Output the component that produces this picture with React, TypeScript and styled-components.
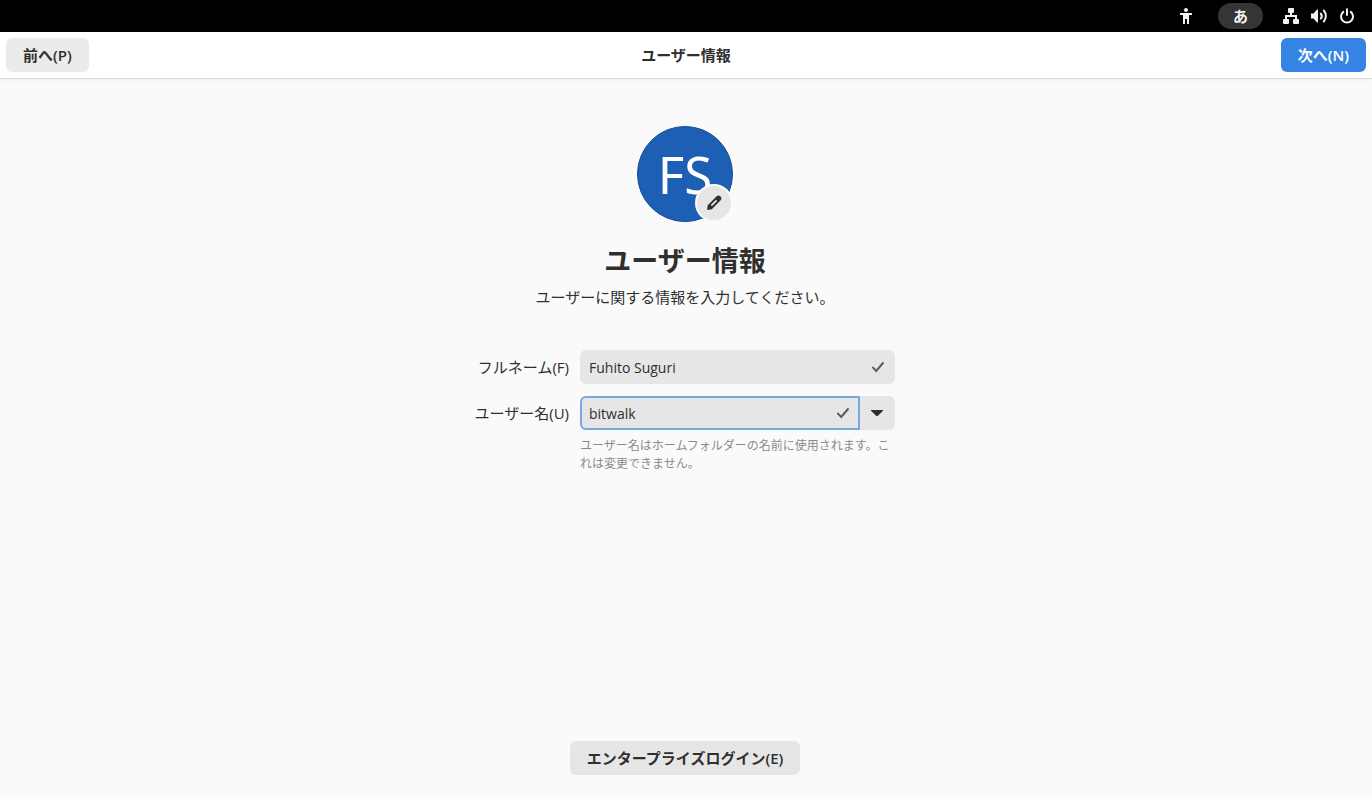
import React, { useState } from "react";
import styled, { createGlobalStyle } from "styled-components";

const Global = createGlobalStyle`
  * { box-sizing: border-box; }
  html, body, #root { height: 100%; }
  body {
    margin: 0;
    background: #fafafa;
    color: #2f2f2f;
    font-family: "Open Sans", "Noto Sans CJK JP", sans-serif;
    font-size: 15px;
    line-height: 22px;
  }
  button, input {
    font: inherit;
    color: inherit;
    border: 0;
    margin: 0;
  }
`;

const Page = styled.div`
  display: flex;
  flex-direction: column;
  min-height: 100%;
`;

const SystemBar = styled.div`
  display: flex;
  justify-content: flex-end;
  align-items: center;
  height: 32px;
  padding-right: 17px;
  background: #000;
  color: #f2f2f2;
`;

const StatusButton = styled.button`
  display: flex;
  padding: 0;
  background: none;
`;

const InputSource = styled.button`
  width: 45px;
  height: 26px;
  padding: 0;
  margin: 0 20px 0 24px;
  border-radius: 13px;
  background: #353535;
  font-weight: 700;
`;

const StatusGroup = styled.div`
  display: flex;
  gap: 12px;
`;

const HeaderBar = styled.header`
  display: grid;
  grid-template-columns: 1fr auto 1fr;
  align-items: center;
  height: 47px;
  padding: 0 6px;
  background: #fff;
  border-bottom: 1px solid #dadada;
  box-shadow: 0 1px 2px rgba(0, 0, 0, 0.06);
`;

const HeaderTitle = styled.div`
  font-weight: 600;
`;

const Button = styled.button<{ $tone?: "primary" | "header"; $end?: boolean }>`
  height: 34px;
  padding: 0 17px;
  border-radius: 6px;
  font-weight: 600;
  justify-self: ${(p) => (p.$end ? "end" : "start")};
  background: ${(p) =>
    p.$tone === "primary" ? "#3584e4" : p.$tone === "header" ? "#ebebeb" : "#e6e6e6"};
  color: ${(p) => (p.$tone === "primary" ? "#fff" : "#2f2f2f")};
`;

const Main = styled.main`
  flex: 1;
  display: flex;
  flex-direction: column;
  align-items: center;
  padding: 47px 26px 24px 24px;
`;

const Avatar = styled.div`
  position: relative;
  display: flex;
  align-items: center;
  justify-content: center;
  width: 96px;
  height: 96px;
  border-radius: 50%;
  border: 1px solid #184f94;
  background: #1c5fb4;
  color: #fff;
  font-family: "Noto Sans", sans-serif;
  font-size: 51px;
  line-height: 70px;
`;

const EditAvatar = styled.button`
  position: absolute;
  right: -1px;
  bottom: -1px;
  display: flex;
  align-items: center;
  justify-content: center;
  width: 38px;
  height: 38px;
  padding: 0;
  border: 2px solid #fafafa;
  border-radius: 50%;
  background: #e6e6e6;
  color: #2f2f2f;
`;

const Heading = styled.h1`
  margin: 19px 0 0;
  font-size: 27px;
  line-height: 40px;
  font-weight: 700;
`;

const Subtitle = styled.p`
  margin: 5px 0 0;
`;

const Form = styled.form`
  display: grid;
  grid-template-columns: 94px 315px;
  column-gap: 11px;
  align-items: center;
  margin-top: 42px;
`;

const Label = styled.label`
  justify-self: end;
  white-space: nowrap;
`;

const UserLabel = styled(Label)`
  margin-top: 12px;
`;

const Field = styled.div<{ $joined?: boolean }>`
  flex: 1;
  display: flex;
  align-items: center;
  min-width: 0;
  height: 34px;
  padding: 0 9px;
  border-radius: ${(p) => (p.$joined ? "6px 0 0 6px" : "6px")};
  background: #e6e6e6;
  box-shadow: ${(p) => (p.$joined ? "inset 0 0 0 2px #7ba7e0" : "none")};
`;

const TextInput = styled.input`
  flex: 1;
  min-width: 0;
  padding: 2px 0 0;
  background: none;
  outline: none;
  font-size: 14px;
`;

const UserRow = styled.div`
  display: flex;
  margin-top: 12px;
`;

const DropButton = styled.button`
  display: flex;
  align-items: center;
  justify-content: center;
  width: 35px;
  padding: 0 1px 0 0;
  border-radius: 0 6px 6px 0;
  background: #e6e6e6;
`;

const Hint = styled.p`
  grid-column: 2;
  margin: 7px 0 0;
  font-size: 12px;
  line-height: 18px;
  color: #8a8a8a;
`;

const Footer = styled.div`
  margin-top: auto;
`;

const Icon = ({ children }: { children: React.ReactNode }) => (
  <svg width="16" height="16" viewBox="0 0 16 16" fill="currentColor" aria-hidden="true">
    {children}
  </svg>
);

const CheckIcon = () => (
  <Icon>
    <path d="M3 8.600 6.200 12 13 4" fill="none" stroke="#5c5c5c" strokeWidth="2" strokeLinecap="round" />
  </Icon>
);

export default function App() {
  const [fullName, setFullName] = useState("Fuhito Suguri");
  const [userName, setUserName] = useState("bitwalk");

  return (
    <Page lang="ja">
      <Global />
      <SystemBar>
        <StatusButton aria-label="アクセシビリティ">
          <Icon>
            <circle cx="8" cy="2" r="2" />
            <path d="M2.500 5h11a.5.5 0 0 1 .5.5v1a.5.5 0 0 1-.5.5H11v8.500a.5.5 0 0 1-.5.5h-1a.5.5 0 0 1-.5-.5V11H7v4.500a.5.5 0 0 1-.5.5h-1a.5.5 0 0 1-.5-.5V7H2.500a.5.5 0 0 1-.5-.5v-1a.5.5 0 0 1 .5-.5z" />
          </Icon>
        </StatusButton>
        <InputSource>あ</InputSource>
        <StatusGroup>
          <StatusButton aria-label="ネットワーク">
            <Icon>
              <path d="M6 0h4a1 1 0 0 1 1 1v3a1 1 0 0 1-1 1H9v2h5v4h1a1 1 0 0 1 1 1v3a1 1 0 0 1-1 1h-4a1 1 0 0 1-1-1v-3a1 1 0 0 1 1-1h1V9H4v2h1a1 1 0 0 1 1 1v3a1 1 0 0 1-1 1H1a1 1 0 0 1-1-1v-3a1 1 0 0 1 1-1h1V7h5V5H6a1 1 0 0 1-1-1V1a1 1 0 0 1 1-1z" />
            </Icon>
          </StatusButton>
          <StatusButton aria-label="音量">
            <Icon>
              <path d="M0 5.500h2.500L6 1.500h1v13H6l-3.500-4H0z" />
              <path d="M9.800 5.500a4 4 0 0 1 0 5M12.800 2.500a8.500 8.500 0 0 1 0 11" fill="none" stroke="currentColor" strokeWidth="2" strokeLinecap="round" />
            </Icon>
          </StatusButton>
          <StatusButton aria-label="電源">
            <Icon>
              <path d="M4.300 3.900a6 6 0 1 0 7.400 0M8 1.200V7" fill="none" stroke="currentColor" strokeWidth="2" strokeLinecap="round" />
            </Icon>
          </StatusButton>
        </StatusGroup>
      </SystemBar>
      <HeaderBar>
        <Button $tone="header">前へ(P)</Button>
        <HeaderTitle>ユーザー情報</HeaderTitle>
        <Button $tone="primary" $end>次へ(N)</Button>
      </HeaderBar>
      <Main>
        <Avatar>
          FS
          <EditAvatar aria-label="写真を編集">
            <Icon>
              <path d="M10.400 1.600a2.800 2.800 0 0 1 4 4l-8.600 8.600L1 15l.8-4.800z" />
              <path d="M5.300 10.700 10.600 5.400" stroke="#e6e6e6" strokeWidth="1.700" />
            </Icon>
          </EditAvatar>
        </Avatar>
        <Heading>ユーザー情報</Heading>
        <Subtitle>ユーザーに関する情報を入力してください。</Subtitle>
        <Form onSubmit={(e) => e.preventDefault()}>
          <Label htmlFor="fullname">フルネーム(F)</Label>
          <Field>
            <TextInput id="fullname" value={fullName} onChange={(e) => setFullName(e.target.value)} />
            <CheckIcon />
          </Field>
          <UserLabel htmlFor="username">ユーザー名(U)</UserLabel>
          <UserRow>
            <Field $joined>
              <TextInput id="username" value={userName} onChange={(e) => setUserName(e.target.value)} />
              <CheckIcon />
            </Field>
            <DropButton type="button" aria-label="候補を表示">
              <Icon>
                <path d="M2 5h12v.7L8.700 11H7.300L2 5.700z" />
              </Icon>
            </DropButton>
          </UserRow>
          <Hint>ユーザー名はホームフォルダーの名前に使用されます。これは変更できません。</Hint>
        </Form>
        <Footer>
          <Button>エンタープライズログイン(E)</Button>
        </Footer>
      </Main>
    </Page>
  );
}
